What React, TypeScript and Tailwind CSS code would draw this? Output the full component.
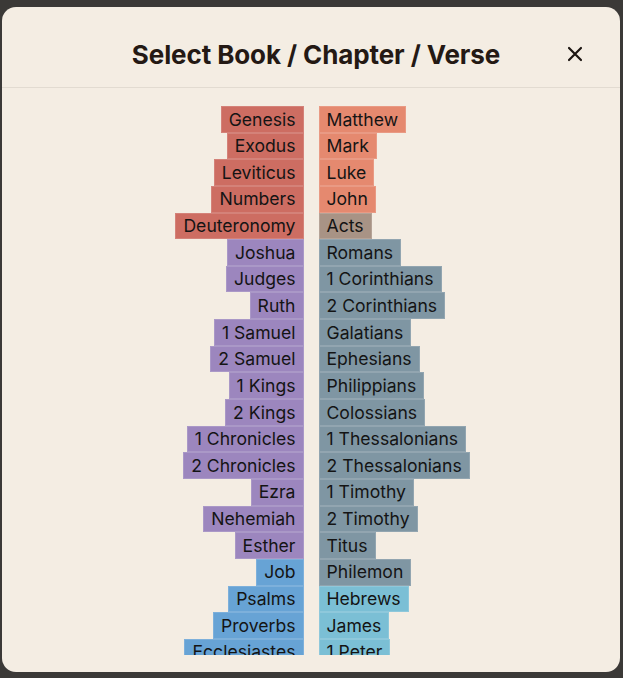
import React from "react";

type Book = { name: string; color: string };

const RED = "bg-[#cd6d62]";
const PURPLE = "bg-[#9c86be]";
const BLUE = "bg-[#67a3d5]";
const ORANGE = "bg-[#e5896f]";
const ACTS = "bg-[#a89385]";
const SLATE = "bg-[#7f96a3]";
const LBLUE = "bg-[#7bbfd5]";

const ot: Book[] = [
  { name: "Genesis", color: RED },
  { name: "Exodus", color: RED },
  { name: "Leviticus", color: RED },
  { name: "Numbers", color: RED },
  { name: "Deuteronomy", color: RED },
  { name: "Joshua", color: PURPLE },
  { name: "Judges", color: PURPLE },
  { name: "Ruth", color: PURPLE },
  { name: "1 Samuel", color: PURPLE },
  { name: "2 Samuel", color: PURPLE },
  { name: "1 Kings", color: PURPLE },
  { name: "2 Kings", color: PURPLE },
  { name: "1 Chronicles", color: PURPLE },
  { name: "2 Chronicles", color: PURPLE },
  { name: "Ezra", color: PURPLE },
  { name: "Nehemiah", color: PURPLE },
  { name: "Esther", color: PURPLE },
  { name: "Job", color: BLUE },
  { name: "Psalms", color: BLUE },
  { name: "Proverbs", color: BLUE },
  { name: "Ecclesiastes", color: BLUE },
  { name: "Song of Songs", color: BLUE },
];

const nt: Book[] = [
  { name: "Matthew", color: ORANGE },
  { name: "Mark", color: ORANGE },
  { name: "Luke", color: ORANGE },
  { name: "John", color: ORANGE },
  { name: "Acts", color: ACTS },
  { name: "Romans", color: SLATE },
  { name: "1 Corinthians", color: SLATE },
  { name: "2 Corinthians", color: SLATE },
  { name: "Galatians", color: SLATE },
  { name: "Ephesians", color: SLATE },
  { name: "Philippians", color: SLATE },
  { name: "Colossians", color: SLATE },
  { name: "1 Thessalonians", color: SLATE },
  { name: "2 Thessalonians", color: SLATE },
  { name: "1 Timothy", color: SLATE },
  { name: "2 Timothy", color: SLATE },
  { name: "Titus", color: SLATE },
  { name: "Philemon", color: SLATE },
  { name: "Hebrews", color: LBLUE },
  { name: "James", color: LBLUE },
  { name: "1 Peter", color: LBLUE },
  { name: "2 Peter", color: LBLUE },
];

function Item({ book, align }: { book: Book; align: "left" | "right" }) {
  return (
    <div
      className={`${book.color} h-[26.65px] shrink-0 px-[7px] border border-white/15 flex items-center text-[17.6px] leading-none text-[#141414] ${
        align === "right" ? "justify-end" : "justify-start"
      }`}
    >
      {book.name}
    </div>
  );
}

export default function App() {
  return (
    <div
      className="w-[623px] h-[678px] bg-[#3b3937] pt-[7px] pl-[2px] pr-[3px] pb-[6px]"
      style={{ fontFamily: "Inter, 'Noto Sans', sans-serif" }}
    >
      <div className="h-full rounded-[14px] bg-[#f4ede3] flex flex-col overflow-hidden">
        <div className="h-[81px] shrink-0 border-b border-[#e2dbd1] relative">
          <div className="w-full text-center text-[26px] leading-[30px] pt-[33px] font-bold text-[#241914] pl-[10px] tracking-[-0.1px]">
            Select Book / Chapter / Verse
          </div>
          <button className="absolute right-[37px] top-[39px] w-[16px] h-[16px] flex items-center justify-center">
            <svg width="16" height="16" viewBox="0 0 16 16">
              <path d="M2 2 L14 14 M14 2 L2 14" stroke="#1d1612" strokeWidth="2.2" strokeLinecap="round" />
            </svg>
          </button>
        </div>
        <div className="flex-1 min-h-0 pt-[18px] pb-[17px]">
          <div className="h-full overflow-hidden grid grid-cols-2 gap-x-[15px]">
            <div className="flex flex-col items-end">
              {ot.map((b) => (
                <Item key={b.name} book={b} align="right" />
              ))}
            </div>
            <div className="flex flex-col items-start">
              {nt.map((b) => (
                <Item key={b.name} book={b} align="left" />
              ))}
            </div>
          </div>
        </div>
      </div>
    </div>
  );
}
